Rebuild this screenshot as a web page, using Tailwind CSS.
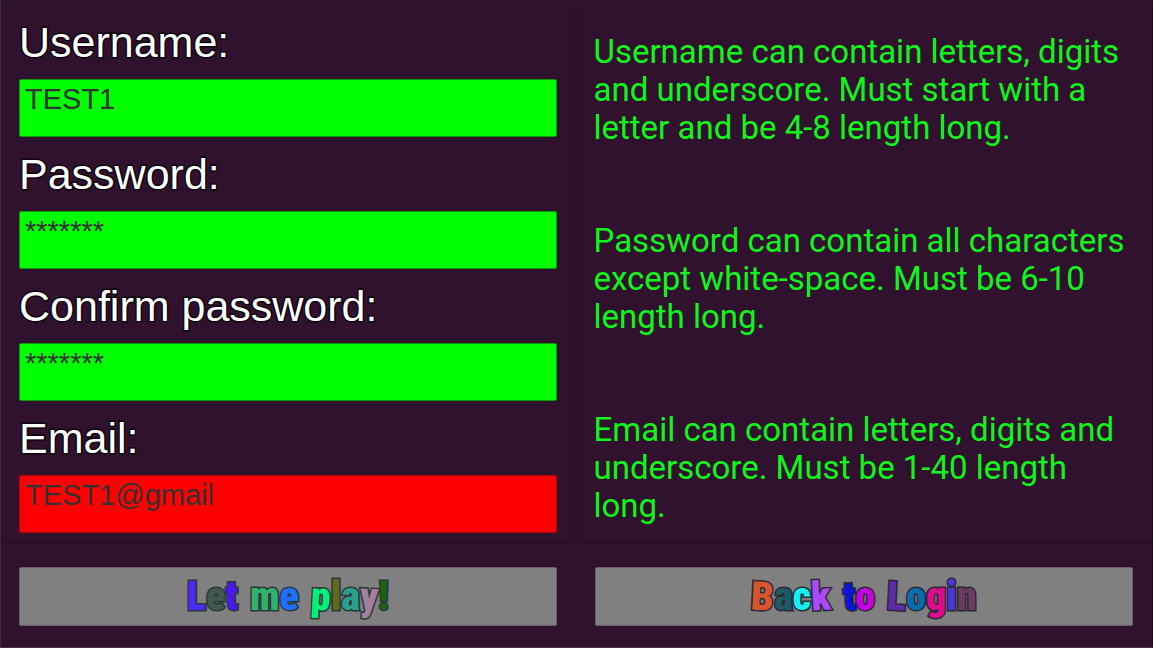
<!DOCTYPE html>
<html lang="en">
<head>
<meta charset="utf-8">
<meta name="viewport" content="width=device-width, initial-scale=1">
<title>Register</title>
<script src="https://cdn.jsdelivr.net/npm/@tailwindcss/browser@4"></script>
</head>
<body class="bg-[#30122e]">
<form class="flex min-h-screen flex-col border border-t-[#241a2c] border-r-[#1c0c1c] border-b-[#44363f] border-l-[#392c40] font-['Liberation_Sans',Arial,sans-serif]">
  <main class="grid grow grid-cols-2 border-b-2 border-[#280f28]">
    <section class="flex flex-col border-r-2 border-[#280f28] pt-1 pr-[18px] pb-2 pl-[18px] text-[29px] text-[#323232]">
      <label for="username" class="text-[43px] leading-[74px] text-white [paint-order:stroke_fill] [-webkit-text-stroke:3px_#0c060c]">Username:</label>
      <input id="username" type="text" value="TEST1" class="h-[58px] w-full rounded-xs border border-[#0a9a0a] bg-[#00ff00] px-[5px] pt-[2px] pb-[20px] leading-[34px] outline-none">
      <label for="password" class="text-[43px] leading-[74px] text-white [paint-order:stroke_fill] [-webkit-text-stroke:3px_#0c060c]">Password:</label>
      <input id="password" type="text" value="*******" class="h-[58px] w-full rounded-xs border border-[#0a9a0a] bg-[#00ff00] px-[5px] pt-[2px] pb-[20px] leading-[34px] outline-none">
      <label for="confirm" class="text-[43px] leading-[74px] text-white [paint-order:stroke_fill] [-webkit-text-stroke:3px_#0c060c]">Confirm password:</label>
      <input id="confirm" type="text" value="*******" class="h-[58px] w-full rounded-xs border border-[#0a9a0a] bg-[#00ff00] px-[5px] pt-[2px] pb-[20px] leading-[34px] outline-none">
      <label for="email" class="text-[43px] leading-[74px] text-white [paint-order:stroke_fill] [-webkit-text-stroke:3px_#0c060c]">Email:</label>
      <input id="email" type="text" value="TEST1@gmail" class="h-[58px] w-full rounded-xs border border-[#b00808] bg-[#ff0000] px-[5px] pt-[2px] pb-[20px] leading-[34px] outline-none">
    </section>
    <section class="flex flex-col gap-[75px] pt-8 pr-[18px] pl-[17px] font-[Roboto,sans-serif] text-[33px] leading-[38px] text-[#10f51c]">
      <p>Username can contain letters, digits and underscore. Must start with a letter and be 4-8 length long.</p>
      <p>Password can contain all characters except white-space. Must be 6-10 length long.</p>
      <p>Email can contain letters, digits and underscore. Must be 1-40 length long.</p>
    </section>
  </main>
  <footer class="grid grid-cols-2 gap-[38px] pt-6 pr-[19px] pb-[21px] pl-[18px] text-[40px] leading-none font-black font-['Roboto_Condensed','Open_Sans_Condensed','Noto_Sans_Condensed',Impact,'Liberation_Sans',sans-serif]">
    <button type="submit" class="flex h-[59px] items-center justify-center gap-3 rounded-xs border border-[#6a5f69] bg-[#808080] [paint-order:stroke_fill] [-webkit-text-stroke:3px_#2b3838]">
      <span class="flex"><span class="text-[#4a2bf5]">L</span><span class="text-[#3f5852]">e</span><span class="text-[#4c16f0]">t</span></span>
      <span class="flex"><span class="text-[#2fb26c]">m</span><span class="text-[#1e6eff]">e</span></span>
      <span class="flex"><span class="rotate-3 text-[#00f078]">p</span><span class="text-[#5f6a1c]">l</span><span class="text-[#2ca08c]">a</span><span class="rotate-3 text-[#a0809a]">y</span><span class="text-[#1c6414]">!</span></span>
    </button>
    <button type="button" class="flex h-[59px] items-center justify-center gap-3 rounded-xs border border-[#6a5f69] bg-[#808080] [paint-order:stroke_fill] [-webkit-text-stroke:3px_#2b2838]">
      <span class="flex"><span class="rotate-3 text-[#d8552c]">B</span><span class="text-[#1c5a64]">a</span><span class="text-[#10f0f0]">c</span><span class="-rotate-3 text-[#ac48f8]">k</span></span>
      <span class="flex"><span class="-rotate-3 text-[#0a14dc]">t</span><span class="text-[#c800e0]">o</span></span>
      <span class="flex"><span class="rotate-3 text-[#5a2ca8]">L</span><span class="text-[#0a6cac]">o</span><span class="text-[#dc0c8c]">g</span><span class="text-[#4a38e0]">i</span><span class="text-[#6e3c60]">n</span></span>
    </button>
  </footer>
</form>
</body>
</html>
